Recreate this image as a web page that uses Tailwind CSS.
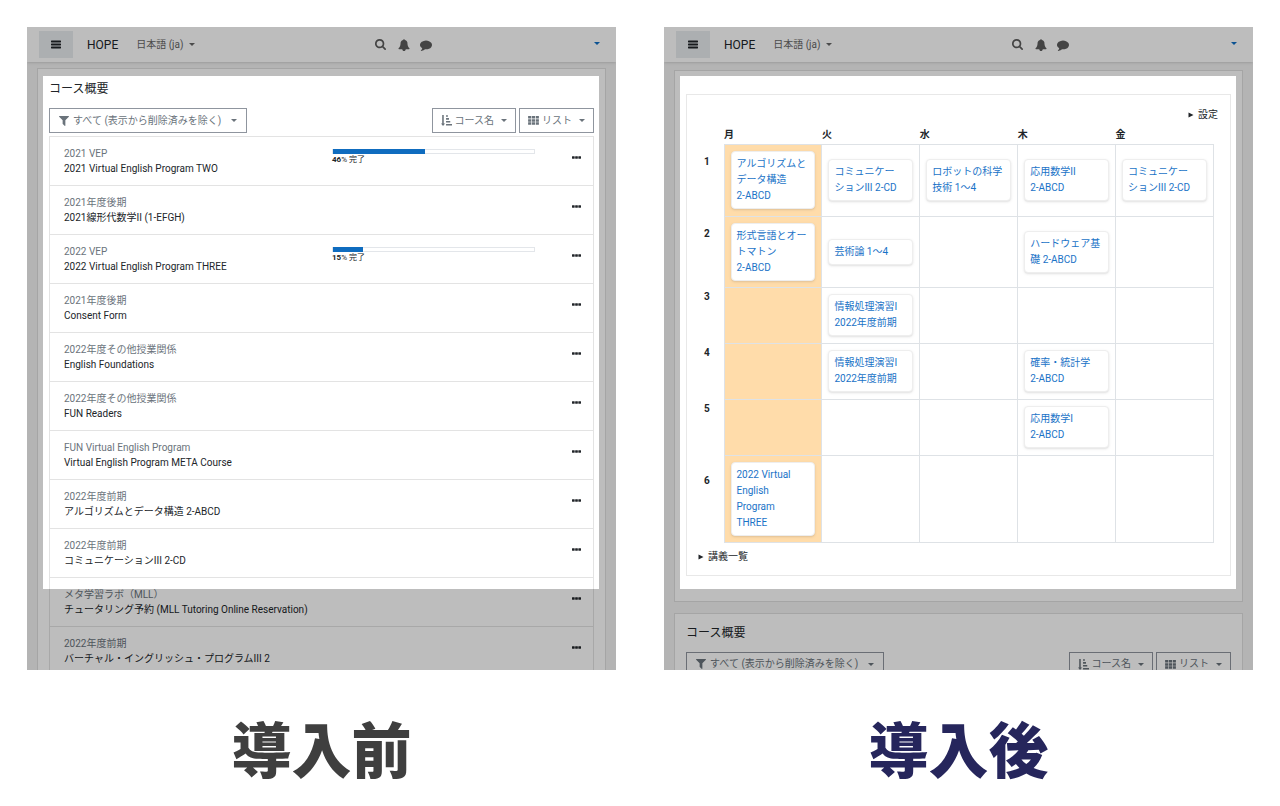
<!DOCTYPE html>
<html lang="ja">
<head>
<meta charset="utf-8">
<meta name="viewport" content="width=device-width, initial-scale=1">
<title>HOPE 導入前・導入後</title>
<script src="https://cdn.jsdelivr.net/npm/@tailwindcss/browser@4"></script>
</head>
<body class="bg-white fill-[#212529] font-['Roboto','Noto_Sans_CJK_JP',sans-serif] text-[10px] leading-4 text-[#212529]">

<svg class="hidden" aria-hidden="true">
  <symbol id="i-bars" viewBox="0 0 10 9"><path d="M.4 .6h9.2l.4.4v1l-.4.4H.4L0 2V1zM.4 3.6h9.2l.4.4v1l-.4.4H.4L0 5V4zM.4 6.6h9.2l.4.4v1l-.4.4H.4L0 8V7z"/></symbol>
  <symbol id="i-caret" viewBox="0 0 6 3"><path d="M0 0h6L3 3z"/></symbol>
  <symbol id="i-tri" viewBox="0 0 6 6"><path d="M.5 .5l5 2.5-5 2.5z"/></symbol>
  <symbol id="i-search" viewBox="0 0 1664 1664"><path d="M1152 704q0-185-131.5-316.5t-316.5-131.5-316.5 131.5-131.5 316.5 131.5 316.5 316.5 131.5 316.5-131.5 131.5-316.5zm512 832q0 52-38 90t-90 38q-54 0-90-38l-343-342q-179 124-399 124-143 0-273.5-55.5t-225-150-150-225-55.5-273.5 55.5-273.5 150-225 225-150 273.5-55.5 273.5 55.5 225 150 150 225 55.5 273.5q0 220-124 399l343 343q37 37 37 90z"/></symbol>
  <symbol id="i-bell" viewBox="0 0 1792 1792"><path d="M1728 1408q0 52-38 90t-90 38h-448q0 106-75 181t-181 75-181-75-75-181h-448q-52 0-90-38t-38-90q50-42 91-88t85-119.5 74.5-158.5 50-206 19.5-260q0-152 117-282.5t307-158.5q-8-19-8-39 0-40 28-68t68-28 68 28 28 68q0 20-8 39 190 28 307 158.5t117 282.5q0 139 19.5 260t50 206 74.5 158.5 85 119.5 91 88z"/></symbol>
  <symbol id="i-comment" viewBox="0 0 1792 1792"><path d="M1792 896q0 174-120 321.5t-326 233-450 85.5q-70 0-145-8-198 175-460 225-49 14-114 22-17 2-30.5-9t-17.5-29v-1q-3-4-.5-12t2-10 4.5-9.5l6-9 7-8.5 8-9q7-8 31-34.5t34.5-38 31-39.5 32.5-51 27-59 26-76q-157-89-247.5-220t-90.5-281q0-130 71-248.5t191-204.5 286-136.5 348-50.5q244 0 450 85.5t326 233 120 321.5z"/></symbol>
  <symbol id="i-filter" viewBox="192 256 1408 1408"><path d="M1595 295q17 41-14 70l-493 493v742q0 42-39 59-13 5-25 5-27 0-45-19l-256-256q-19-19-19-45v-486l-493-493q-31-29-14-70 17-39 59-39h1280q42 0 59 39z"/></symbol>
  <symbol id="i-sort" viewBox="0 0 12 12"><path d="M1.3 0h1.7v9.2h1.5L2.2 12 0 9.2h1.3zM5.5 .2h2v1.7h-2zM5.5 3.4h3.2v1.7H5.5zM5.5 6.6h4.6v1.7H5.5zM5.5 9.8H12v1.7H5.5z"/></symbol>
  <symbol id="i-grid" viewBox="0 0 12 10"><path d="M0 0h3.5v2.8H0zM4.2 0h3.5v2.8H4.2zM8.5 0H12v2.8H8.5zM0 3.5h3.5v2.8H0zM4.2 3.5h3.5v2.8H4.2zM8.5 3.5H12v2.8H8.5zM0 7h3.5v2.8H0zM4.2 7h3.5v2.8H4.2zM8.5 7H12v2.8H8.5z"/></symbol>
  <symbol id="i-dots" viewBox="0 0 10 3"><path d="M.5 0h2l.5.5v2l-.5.5h-2l-.5-.5v-2zM4 0h2l.5.5v2L6 3H4l-.5-.5v-2zM7.5 0h2l.5.5v2l-.5.5h-2L7 2.5v-2z"/></symbol>
</svg>

<main class="grid h-screen grid-cols-2 gap-12 px-[27px] pt-[27px]">

  <!-- Before -->
  <figure class="flex min-h-0 flex-col">
    <div class="relative min-h-0 flex-1 overflow-hidden bg-[#f3f3f3]">
      <header class="relative flex h-[35px] items-center bg-white pr-4 pl-3 shadow-sm">
        <button type="button" aria-label="メニュー" class="flex h-[27px] w-[34px] items-center justify-center bg-[#e9ecef]"><svg class="h-[9px] w-[10px]"><use href="#i-bars"/></svg></button>
        <a href="#" class="ml-[14px] text-xs">HOPE</a>
        <button type="button" class="mr-[18px] ml-[18px] flex items-center gap-1.5 text-[#666]">日本語 (ja)<svg class="h-[3px] w-1.5 fill-current"><use href="#i-caret"/></svg></button>
        <nav class="mx-auto flex items-center gap-3 text-[#5c5c5c]">
          <button type="button" aria-label="検索"><svg class="size-[11px] fill-current"><use href="#i-search"/></svg></button>
          <button type="button" aria-label="通知"><svg class="size-3 fill-current"><use href="#i-bell"/></svg></button>
          <button type="button" aria-label="メッセージ" class="-ml-0.5"><svg class="size-3 fill-current"><use href="#i-comment"/></svg></button>
        </nav>
        <button type="button" aria-label="ユーザーメニュー" class="pb-0.5 text-[#0f6fc5]"><svg class="h-[3px] w-1.5 fill-current"><use href="#i-caret"/></svg></button>
      </header>

      <section class="mx-[10px] mt-1.5 border border-[#dfdfdf] bg-white px-[11px] pt-3">
        <h2 class="mb-[11px] text-xs leading-4">コース概要</h2>
        <div class="mb-[3px] flex gap-[3px] text-[#6a737b]">
          <button type="button" class="mr-auto flex h-[25px] items-center gap-1 border border-[#8f959e] px-[9px]"><svg class="size-[10px] fill-current"><use href="#i-filter"/></svg>すべて (表示から削除済みを除く)<svg class="ml-1.5 h-[3px] w-1.5 fill-current"><use href="#i-caret"/></svg></button>
          <button type="button" class="flex h-[25px] items-center gap-[3px] border border-[#8f959e] px-2"><svg class="size-[11px] fill-current"><use href="#i-sort"/></svg>コース名<svg class="ml-1 h-[3px] w-1.5 fill-current"><use href="#i-caret"/></svg></button>
          <button type="button" class="flex h-[25px] items-center gap-[3px] border border-[#8f959e] px-2"><svg class="h-[9px] w-[11px] fill-current"><use href="#i-grid"/></svg>リスト<svg class="ml-1 h-[3px] w-1.5 fill-current"><use href="#i-caret"/></svg></button>
        </div>
        <ul class="border-x border-[#e3e3e3] leading-[15px]">
          <li class="flex items-center border-t border-[#e3e3e3] py-[9px] pr-3 pl-[14px]">
            <div class="flex-1"><p class="text-[#6a737b]">2021 VEP</p><a href="#">2021 Virtual English Program TWO</a></div>
            <div class="mr-[37px] w-[203px] self-start pt-[3px] text-[8px] leading-3"><div class="h-[5px] border border-[#e3e6ea]"><div class="h-[5px] -translate-y-px bg-[#0f6cbf]" style="width:46%"></div></div><b>46</b>% 完了</div>
            <button type="button" aria-label="操作" class="pb-2"><svg class="h-[3px] w-[9px]"><use href="#i-dots"/></svg></button>
          </li>
          <li class="flex items-center border-t border-[#e3e3e3] py-[9px] pr-3 pl-[14px]">
            <div class="flex-1"><p class="text-[#6a737b]">2021年度後期</p><a href="#">2021線形代数学II (1-EFGH)</a></div>
            <button type="button" aria-label="操作" class="pb-2"><svg class="h-[3px] w-[9px]"><use href="#i-dots"/></svg></button>
          </li>
          <li class="flex items-center border-t border-[#e3e3e3] py-[9px] pr-3 pl-[14px]">
            <div class="flex-1"><p class="text-[#6a737b]">2022 VEP</p><a href="#">2022 Virtual English Program THREE</a></div>
            <div class="mr-[37px] w-[203px] self-start pt-[3px] text-[8px] leading-3"><div class="h-[5px] border border-[#e3e6ea]"><div class="h-[5px] -translate-y-px bg-[#0f6cbf]" style="width:15%"></div></div><b>15</b>% 完了</div>
            <button type="button" aria-label="操作" class="pb-2"><svg class="h-[3px] w-[9px]"><use href="#i-dots"/></svg></button>
          </li>
          <li class="flex items-center border-t border-[#e3e3e3] py-[9px] pr-3 pl-[14px]">
            <div class="flex-1"><p class="text-[#6a737b]">2021年度後期</p><a href="#">Consent Form</a></div>
            <button type="button" aria-label="操作" class="pb-2"><svg class="h-[3px] w-[9px]"><use href="#i-dots"/></svg></button>
          </li>
          <li class="flex items-center border-t border-[#e3e3e3] py-[9px] pr-3 pl-[14px]">
            <div class="flex-1"><p class="text-[#6a737b]">2022年度その他授業関係</p><a href="#">English Foundations</a></div>
            <button type="button" aria-label="操作" class="pb-2"><svg class="h-[3px] w-[9px]"><use href="#i-dots"/></svg></button>
          </li>
          <li class="flex items-center border-t border-[#e3e3e3] py-[9px] pr-3 pl-[14px]">
            <div class="flex-1"><p class="text-[#6a737b]">2022年度その他授業関係</p><a href="#">FUN Readers</a></div>
            <button type="button" aria-label="操作" class="pb-2"><svg class="h-[3px] w-[9px]"><use href="#i-dots"/></svg></button>
          </li>
          <li class="flex items-center border-t border-[#e3e3e3] py-[9px] pr-3 pl-[14px]">
            <div class="flex-1"><p class="text-[#6a737b]">FUN Virtual English Program</p><a href="#">Virtual English Program META Course</a></div>
            <button type="button" aria-label="操作" class="pb-2"><svg class="h-[3px] w-[9px]"><use href="#i-dots"/></svg></button>
          </li>
          <li class="flex items-center border-t border-[#e3e3e3] py-[9px] pr-3 pl-[14px]">
            <div class="flex-1"><p class="text-[#6a737b]">2022年度前期</p><a href="#">アルゴリズムとデータ構造 2-ABCD</a></div>
            <button type="button" aria-label="操作" class="pb-2"><svg class="h-[3px] w-[9px]"><use href="#i-dots"/></svg></button>
          </li>
          <li class="flex items-center border-t border-[#e3e3e3] py-[9px] pr-3 pl-[14px]">
            <div class="flex-1"><p class="text-[#6a737b]">2022年度前期</p><a href="#">コミュニケーションIII 2-CD</a></div>
            <button type="button" aria-label="操作" class="pb-2"><svg class="h-[3px] w-[9px]"><use href="#i-dots"/></svg></button>
          </li>
          <li class="flex items-center border-t border-[#e3e3e3] py-[9px] pr-3 pl-[14px]">
            <div class="flex-1"><p class="text-[#6a737b]">メタ学習ラボ（MLL）</p><a href="#">チュータリング予約 (MLL Tutoring Online Reservation)</a></div>
            <button type="button" aria-label="操作" class="pb-2"><svg class="h-[3px] w-[9px]"><use href="#i-dots"/></svg></button>
          </li>
          <li class="flex items-center border-t border-[#e3e3e3] py-[9px] pr-3 pl-[14px]">
            <div class="flex-1"><p class="text-[#6a737b]">2022年度前期</p><a href="#">バーチャル・イングリッシュ・プログラムIII 2</a></div>
            <button type="button" aria-label="操作" class="pb-2"><svg class="h-[3px] w-[9px]"><use href="#i-dots"/></svg></button>
          </li>
        </ul>
      </section>

      <!-- Dimmed surround with a clear window over the course list -->
      <div class="pointer-events-none absolute top-[49px] right-[17px] bottom-[81px] left-4 shadow-[0_0_0_2000px_rgba(0,0,0,0.26)]"></div>
    </div>
    <figcaption class="pt-[53px] pb-[23px] text-center text-[60px] leading-[60px] font-black text-[#3f3f3f]">導入前</figcaption>
  </figure>

  <!-- After -->
  <figure class="flex min-h-0 flex-col">
    <div class="relative min-h-0 flex-1 overflow-hidden bg-[#f3f3f3]">
      <header class="relative flex h-[35px] items-center bg-white pr-4 pl-3 shadow-sm">
        <button type="button" aria-label="メニュー" class="flex h-[27px] w-[34px] items-center justify-center bg-[#e9ecef]"><svg class="h-[9px] w-[10px]"><use href="#i-bars"/></svg></button>
        <a href="#" class="ml-[14px] text-xs">HOPE</a>
        <button type="button" class="mr-[18px] ml-[18px] flex items-center gap-1.5 text-[#666]">日本語 (ja)<svg class="h-[3px] w-1.5 fill-current"><use href="#i-caret"/></svg></button>
        <nav class="mx-auto flex items-center gap-3 text-[#5c5c5c]">
          <button type="button" aria-label="検索"><svg class="size-[11px] fill-current"><use href="#i-search"/></svg></button>
          <button type="button" aria-label="通知"><svg class="size-3 fill-current"><use href="#i-bell"/></svg></button>
          <button type="button" aria-label="メッセージ" class="-ml-0.5"><svg class="size-3 fill-current"><use href="#i-comment"/></svg></button>
        </nav>
        <button type="button" aria-label="ユーザーメニュー" class="pb-0.5 text-[#0f6fc5]"><svg class="h-[3px] w-1.5 fill-current"><use href="#i-caret"/></svg></button>
      </header>

      <section class="mx-[10px] mt-2 border border-[#dfdfdf] bg-white px-[11px] pt-[23px] pb-[25px]">
        <div class="border border-[#e8e8e8] pt-3 pb-[10px]">
          <details>
            <summary class="flex items-center justify-end gap-1 pr-3"><svg class="size-1.5"><use href="#i-tri"/></svg>設定</summary>
          </details>
          <div class="mt-1 mb-1.5 pr-4 pl-[3px]">
            <table class="w-full table-fixed border-collapse">
              <thead>
                <tr class="h-[17px] text-left leading-4">
                  <th class="w-[34px]"></th>
                  <th scope="col">月</th><th scope="col">火</th><th scope="col">水</th><th scope="col">木</th><th scope="col">金</th>
                </tr>
              </thead>
              <tbody class="text-[#1a73c7] [&_a]:block [&_a]:rounded-sm [&_a]:border [&_a]:border-[#eee] [&_a]:bg-white [&_a]:px-[5px] [&_a]:py-1 [&_a]:whitespace-nowrap [&_a]:shadow-sm [&_td]:border [&_td]:border-[#dee2e6] [&_td]:bg-clip-padding [&_td]:px-1.5 [&_td]:py-1.5 [&_th]:pb-9 [&_th]:text-[#212529]">
                <tr class="h-[72px]">
                  <th scope="row">1</th>
                  <td class="bg-[#ffdcaa]"><a href="#">アルゴリズムと<br>データ構造<br>2-ABCD</a></td>
                  <td><a href="#">コミュニケー<br>ションIII 2-CD</a></td>
                  <td><a href="#">ロボットの科学<br>技術 1〜4</a></td>
                  <td><a href="#">応用数学II<br>2-ABCD</a></td>
                  <td><a href="#">コミュニケー<br>ションIII 2-CD</a></td>
                </tr>
                <tr class="h-[71px]">
                  <th scope="row">2</th>
                  <td class="bg-[#ffdcaa]"><a href="#">形式言語とオー<br>トマトン<br>2-ABCD</a></td>
                  <td><a href="#">芸術論 1〜4</a></td>
                  <td></td>
                  <td><a href="#">ハードウェア基<br>礎 2-ABCD</a></td>
                  <td></td>
                </tr>
                <tr class="h-[56px]">
                  <th scope="row">3</th>
                  <td class="bg-[#ffdcaa]"></td>
                  <td><a href="#">情報処理演習I<br>2022年度前期</a></td>
                  <td></td><td></td><td></td>
                </tr>
                <tr class="h-[56px]">
                  <th scope="row">4</th>
                  <td class="bg-[#ffdcaa]"></td>
                  <td><a href="#">情報処理演習I<br>2022年度前期</a></td>
                  <td></td>
                  <td><a href="#">確率・統計学<br>2-ABCD</a></td>
                  <td></td>
                </tr>
                <tr class="h-[56px]">
                  <th scope="row">5</th>
                  <td class="bg-[#ffdcaa]"></td>
                  <td></td><td></td>
                  <td><a href="#">応用数学I<br>2-ABCD</a></td>
                  <td></td>
                </tr>
                <tr class="h-[87px]">
                  <th scope="row">6</th>
                  <td class="bg-[#ffdcaa]"><a href="#">2022 Virtual<br>English<br>Program<br>THREE</a></td>
                  <td></td><td></td><td></td><td></td>
                </tr>
              </tbody>
            </table>
          </div>
          <details>
            <summary class="flex items-center gap-1 pl-[11px]"><svg class="size-1.5"><use href="#i-tri"/></svg>講義一覧</summary>
          </details>
        </div>
      </section>

      <section class="mx-[10px] mt-[11px] border border-[#dfdfdf] bg-white px-[11px] pt-[11px] pb-6">
        <h2 class="mb-[11px] text-xs leading-4">コース概要</h2>
        <div class="flex gap-[3px] text-[#6a737b]">
          <button type="button" class="mr-auto flex h-[25px] items-center gap-1 border border-[#8f959e] px-[9px]"><svg class="size-[10px] fill-current"><use href="#i-filter"/></svg>すべて (表示から削除済みを除く)<svg class="ml-1.5 h-[3px] w-1.5 fill-current"><use href="#i-caret"/></svg></button>
          <button type="button" class="flex h-[25px] items-center gap-[3px] border border-[#8f959e] px-2"><svg class="size-[11px] fill-current"><use href="#i-sort"/></svg>コース名<svg class="ml-1 h-[3px] w-1.5 fill-current"><use href="#i-caret"/></svg></button>
          <button type="button" class="flex h-[25px] items-center gap-[3px] border border-[#8f959e] px-2"><svg class="h-[9px] w-[11px] fill-current"><use href="#i-grid"/></svg>リスト<svg class="ml-1 h-[3px] w-1.5 fill-current"><use href="#i-caret"/></svg></button>
        </div>
      </section>

      <!-- Dimmed surround with a clear window over the timetable -->
      <div class="pointer-events-none absolute top-[49px] right-[17px] bottom-[81px] left-4 shadow-[0_0_0_2000px_rgba(0,0,0,0.26)]"></div>
    </div>
    <figcaption class="pt-[53px] pb-[23px] text-center text-[60px] leading-[60px] font-black text-[#26265c]">導入後</figcaption>
  </figure>
</main>
</body>
</html>
